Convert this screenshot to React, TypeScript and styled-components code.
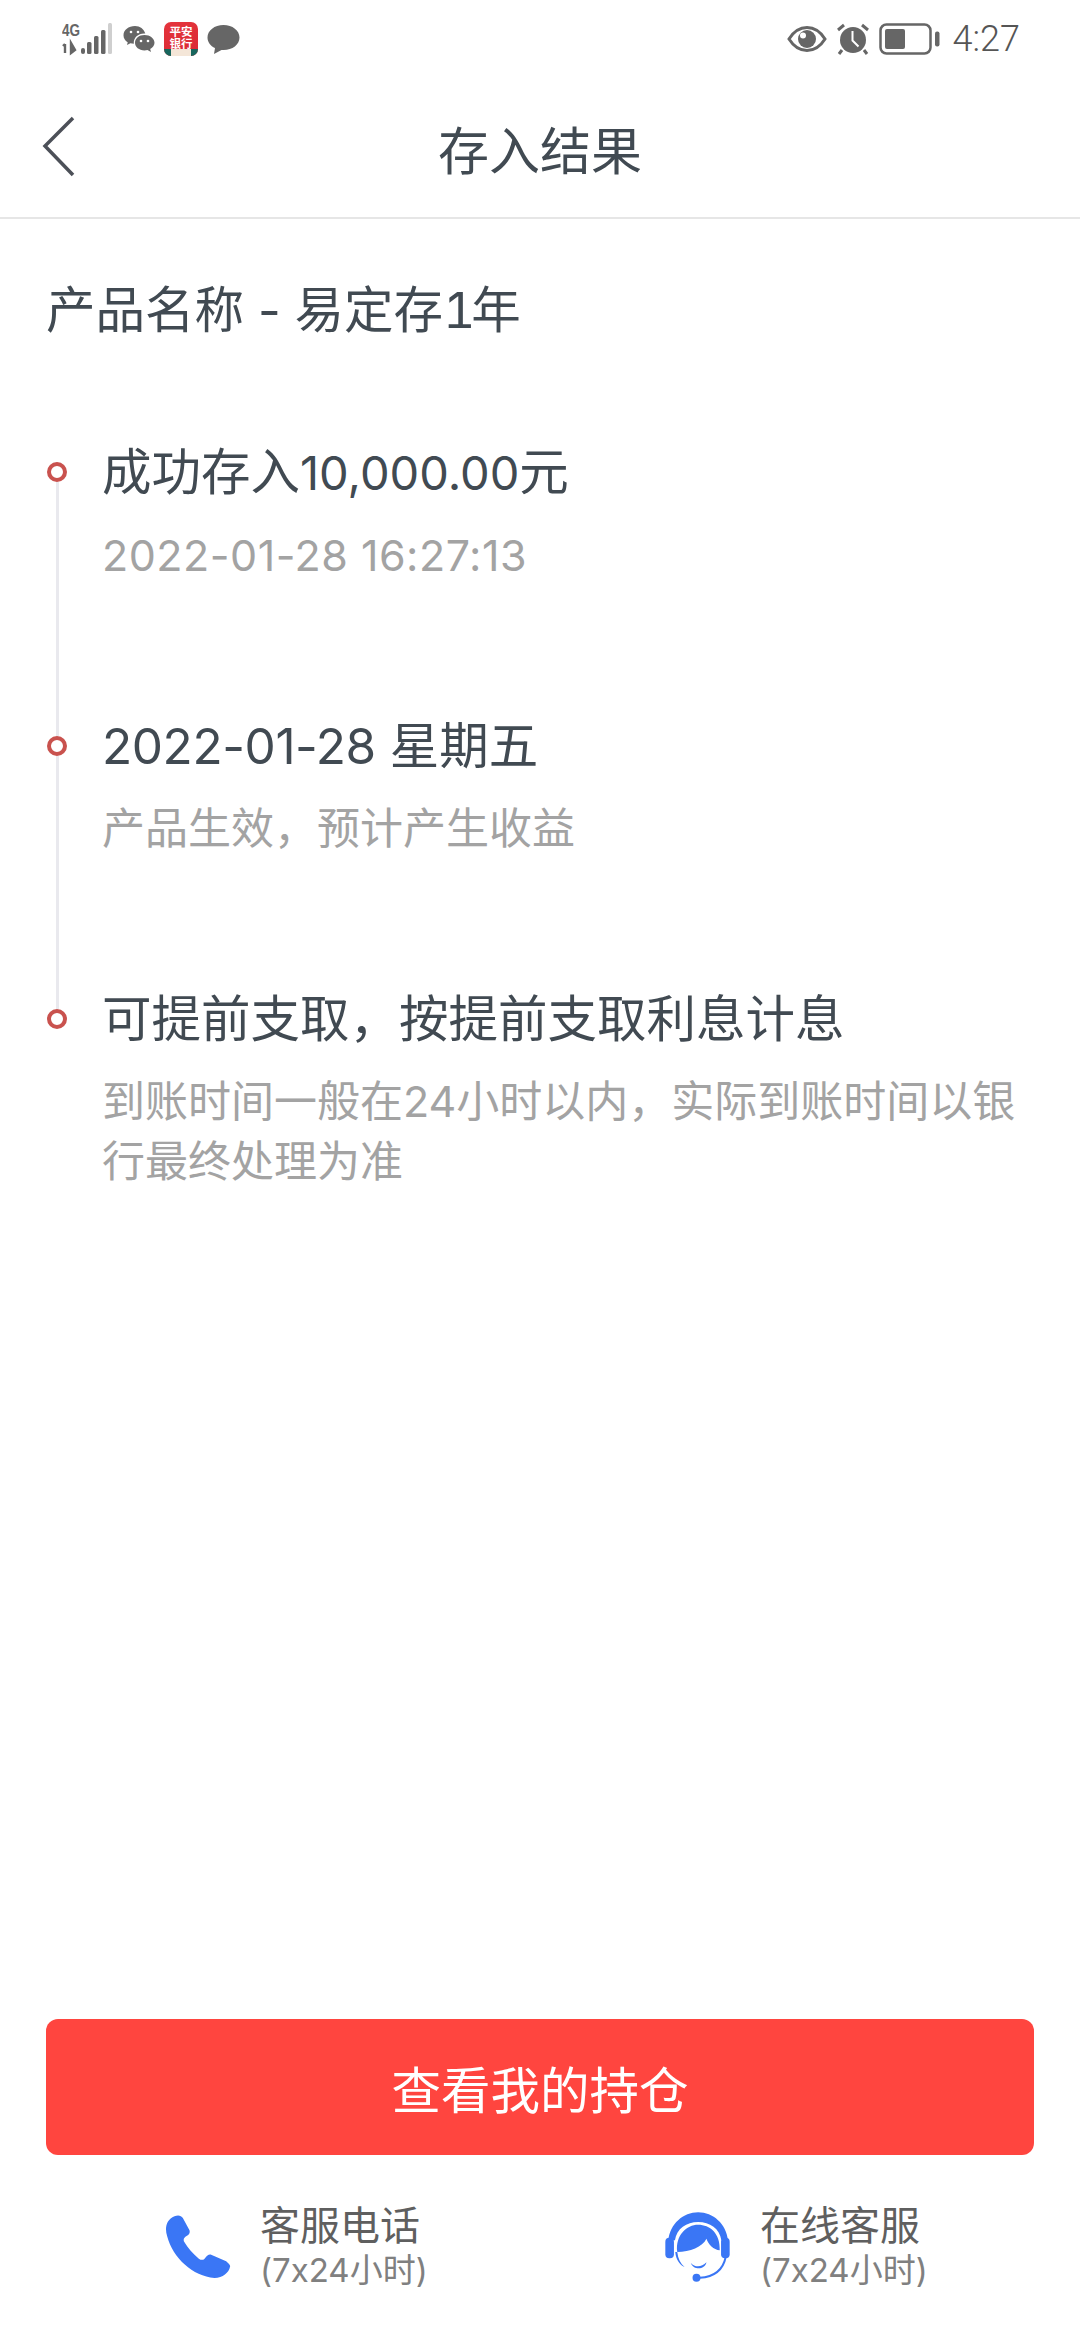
import React from 'react';
import styled, { createGlobalStyle } from 'styled-components';

const GlobalStyle = createGlobalStyle`
  html, body {
    margin: 0;
    padding: 0;
    background: #fff;
  }
  * {
    box-sizing: border-box;
  }
`;

const FONT = `Inter, "Noto Sans CJK SC", sans-serif`;

const Page = styled.div`
  width: 1080px;
  height: 2340px;
  display: flex;
  flex-direction: column;
  background: #fff;
  font-family: ${FONT};
  font-feature-settings: 'calt' 0;
  overflow: hidden;
`;

const StatusBar = styled.div`
  height: 78px;
  padding: 0 60px 0 62px;
  display: flex;
  justify-content: space-between;
  align-items: center;
  flex-shrink: 0;
`;

const StatusGroup = styled.div<{ $gap: number }>`
  display: flex;
  align-items: center;
  gap: ${(p) => p.$gap}px;
`;

const Clock = styled.span`
  font-family: Roboto, sans-serif;
  font-weight: 300;
  font-size: 36px;
  color: #555;
  margin-left: 4px;
`;

const NavBar = styled.div`
  height: 141px;
  position: relative;
  display: flex;
  align-items: center;
  justify-content: center;
  border-bottom: 2px solid #e6e6e6;
  flex-shrink: 0;
`;

const BackButton = styled.svg`
  position: absolute;
  left: 42px;
  top: 38px;
`;

const NavTitle = styled.h1`
  margin: 0;
  font-size: 51px;
  font-weight: 400;
  color: #414a52;
`;

const Content = styled.div`
  flex: 1;
  padding: 58px 46px 0;
`;

const ProductName = styled.div`
  font-size: 49.5px;
  line-height: 66px;
  color: #414a52;
  margin-bottom: 103px;
`;

const WideDigit = styled.span`
  font-variant-numeric: tabular-nums;
  letter-spacing: -4px;
`;

const Timeline = styled.div`
  display: flex;
  flex-direction: column;
`;

const Step = styled.div<{ $height?: number }>`
  display: flex;
  height: ${(p) => (p.$height ? `${p.$height}px` : 'auto')};
`;

const Rail = styled.div`
  width: 21px;
  margin-right: 35px;
  padding-top: 16px;
  display: flex;
  flex-direction: column;
  align-items: center;
  flex-shrink: 0;
`;

const Dot = styled.span`
  width: 20px;
  height: 20px;
  border-radius: 50%;
  border: 4px solid #c9524e;
  flex-shrink: 0;
`;

const RailLine = styled.span`
  flex: 1;
  width: 3px;
  margin-left: 2px;
  margin-bottom: -16px;
  background: #e9e9ee;
`;

const StepBody = styled.div`
  flex: 1;
`;

const StepTitle = styled.div`
  font-size: 49.5px;
  line-height: 52px;
  color: #414a52;
  margin-bottom: 26px;
`;

const Amount = styled.span`
  font-size: 47px;
`;

const DateText = styled.span`
  letter-spacing: -0.4px;
`;

const StepText = styled.div<{ $tracking?: number }>`
  font-size: 43px;
  line-height: 60px;
  letter-spacing: ${(p) => p.$tracking ?? 0}px;
  color: #a3a3a3;
`;

const Footer = styled.div`
  padding: 0 46px 49px;
  flex-shrink: 0;
`;

const PrimaryButton = styled.button`
  width: 100%;
  height: 136px;
  border: none;
  border-radius: 12px;
  background: #ff453f;
  color: #fff;
  font-family: ${FONT};
  font-size: 49.5px;
  display: block;
`;

const ContactRow = styled.div`
  display: grid;
  grid-template-columns: 1fr 1fr;
  margin-top: 47px;
`;

const Contact = styled.div<{ $offset: number }>`
  display: flex;
  align-items: center;
  gap: 29px;
  padding-left: ${(p) => p.$offset}px;
`;

const ContactText = styled.div`
  display: flex;
  flex-direction: column;
`;

const ContactName = styled.span`
  font-size: 40px;
  line-height: 47px;
  color: #5f5f5f;
`;

const ContactHours = styled.span`
  font-size: 33px;
  line-height: 42px;
  color: #808080;
`;

const BankBadge = styled.div`
  position: relative;
  width: 34px;
  height: 34px;
  border-radius: 7px;
  overflow: hidden;
  background: linear-gradient(160deg, #e5343c, #d92a34);
  color: #fff;
  font-family: "Noto Sans CJK SC", sans-serif;
  font-size: 11.5px;
  font-weight: 700;
  line-height: 12px;
  text-align: center;
  padding: 3px 5px 0;
  &::after {
    content: '';
    position: absolute;
    left: 0;
    right: 0;
    bottom: 0;
    height: 7px;
    background: linear-gradient(90deg, #17665d 0 20%, #f4e6d8 20% 80%, #17665d 80%);
  }
`;

const SignalIcon = () => (
  <svg width="52" height="34" viewBox="0 0 52 34">
    <text x="0" y="14" fontFamily="Liberation Sans, sans-serif" fontSize="16" fontWeight="700" fill="#666" textLength="18" lengthAdjust="spacingAndGlyphs">4G</text>
    <path d="M3 22v9M1 24l2-2M9 21v10l4-3z" stroke="#666" strokeWidth="2.400" fill="#666" />
    <rect x="19" y="26" width="4" height="6" rx="2" fill="#666" />
    <rect x="25" y="20" width="4.500" height="12" rx="1.500" fill="#666" />
    <rect x="32" y="14" width="4.500" height="18" rx="1.500" fill="#666" />
    <rect x="39" y="8" width="4.500" height="24" rx="1.500" fill="#666" />
    <rect x="46" y="1" width="4" height="31" rx="1.500" fill="#cfcfcf" />
  </svg>
);

const WechatIcon = () => (
  <svg width="32" height="28" viewBox="0 0 32 28">
    <path d="M12 1C5.500 1 .5 5 .5 10.200c0 3 1.600 5.400 4.200 7L4 20l3.400-1.700c1.200.3 2.200.5 3.400.5-.4-6.500 5-10.800 11.500-10.200C21 4 17 1 12 1z" fill="#666" />
    <path d="M21.500 10C16 10 12 13.500 12 17.700s4 7.700 9.500 7.700c1 0 2-.1 3-.4l3.500 2-.8-3c2.700-1.500 4.300-3.800 4.300-6.300C31.500 13.500 27 10 21.500 10z" fill="#666" />
    <circle cx="8" cy="7" r="1.300" fill="#fff" />
    <circle cx="15" cy="7" r="1.300" fill="#fff" />
    <circle cx="18" cy="16" r="1.300" fill="#fff" />
    <circle cx="25" cy="16" r="1.300" fill="#fff" />
  </svg>
);

const BubbleIcon = () => (
  <svg width="33" height="31" viewBox="0 0 33 31">
    <path d="M16.500 1C7.500 1 .5 6.500.5 13.500c0 4.500 3 8.400 7.500 10.600L7 30l7.500-4c.7.100 1.300.100 2 .1 9 0 16-5.600 16-12.600S25.500 1 16.500 1z" fill="#666" />
  </svg>
);

const EyeIcon = () => (
  <svg width="40" height="28" viewBox="0 0 40 28">
    <path d="M2 14C7 6 13 2.500 20 2.500S33 6 38 14c-5 8-11 11.500-18 11.500S7 22 2 14z" fill="none" stroke="#666" strokeWidth="3" />
    <circle cx="20" cy="14" r="9" fill="#666" />
    <circle cx="16" cy="10.500" r="3" fill="#fff" />
  </svg>
);

const AlarmIcon = () => (
  <svg width="36" height="32" viewBox="0 0 36 32">
    <circle cx="18" cy="17" r="13" fill="#666" />
    <path d="M17.500 8v9.500l6 6" fill="none" stroke="#fff" strokeWidth="2" />
    <path d="M3 7l6-5M33 7l-6-5M7 27l-3 4M29 27l3 4" stroke="#666" strokeWidth="3" />
  </svg>
);

const BatteryIcon = () => (
  <svg width="62" height="32" viewBox="0 0 62 32">
    <rect x="1.500" y="1.500" width="50" height="29" rx="6" fill="none" stroke="#666" strokeWidth="2.500" />
    <rect x="6" y="6" width="20" height="20" rx="2" fill="#666" />
    <rect x="56" y="8.500" width="4.500" height="15" rx="2" fill="#666" />
  </svg>
);

const PhoneIcon = () => (
  <svg width="66" height="64" viewBox="103 136 195 192">
    <path d="M130 140C105 150 100 175 108 200C125 265 185 320 250 325C275 325 293 310 297 290C297 285 290 280 285 275L240 255C232 253 228 258 222 265C218 272 210 272 203 267C185 252 170 235 160 218C155 210 158 205 165 200C175 195 177 188 175 182L155 145C150 137 140 135 130 140Z" fill="#3a76f5" />
  </svg>
);

const AgentIcon = () => (
  <svg width="67" height="72" viewBox="22 12 202 216">
    <path d="M35 100C40 50 80 15 125 15C170 15 210 50 215 100L195 100C190 65 160 45 125 45C90 45 60 65 55 100Z" fill="#3a76f5" />
    <path d="M62 135C56 85 90 53 125 53C160 53 192 78 190 130C172 128 155 112 150 95C138 120 100 135 62 135Z" fill="#3a76f5" />
    <path d="M62 135C64 155 72 170 84 180C72 176 58 160 56 135Z" fill="#3a76f5" />
    <path d="M103 168C115 182 135 182 150 166C145 190 110 190 103 168Z" fill="#3a76f5" />
    <rect x="26" y="92" width="26" height="62" rx="12" fill="#3a76f5" />
    <rect x="194" y="92" width="26" height="62" rx="12" fill="#3a76f5" />
    <path d="M208 150C200 190 170 210 130 213" fill="none" stroke="#3a76f5" strokeWidth="6" />
    <circle cx="120" cy="213" r="12" fill="#3a76f5" />
  </svg>
);

const App: React.FC = () => {
  return (
    <Page>
      <GlobalStyle />
      <StatusBar>
        <StatusGroup $gap={9}>
          <SignalIcon />
          <WechatIcon />
          <BankBadge>平安银行</BankBadge>
          <BubbleIcon />
        </StatusGroup>
        <StatusGroup $gap={8}>
          <EyeIcon />
          <AlarmIcon />
          <BatteryIcon />
          <Clock>4:27</Clock>
        </StatusGroup>
      </StatusBar>

      <NavBar>
        <BackButton width="34" height="62" viewBox="0 0 34 62">
          <path d="M31 2L3 30l28 29" fill="none" stroke="#4c5058" strokeWidth="3.500" />
        </BackButton>
        <NavTitle>存入结果</NavTitle>
      </NavBar>

      <Content>
        <ProductName>产品名称 - 易定存<WideDigit>1</WideDigit>年</ProductName>
        <Timeline>
          <Step $height={274}>
            <Rail>
              <Dot />
              <RailLine />
            </Rail>
            <StepBody>
              <StepTitle>成功存入<Amount>10,000.00</Amount>元</StepTitle>
              <StepText $tracking={0.5}>2022-01-28 16:27:13</StepText>
            </StepBody>
          </Step>
          <Step $height={273}>
            <Rail>
              <Dot />
              <RailLine />
            </Rail>
            <StepBody>
              <StepTitle><DateText>2022-01-28</DateText> 星期五</StepTitle>
              <StepText>产品生效，预计产生收益</StepText>
            </StepBody>
          </Step>
          <Step>
            <Rail>
              <Dot />
            </Rail>
            <StepBody>
              <StepTitle>可提前支取，按提前支取利息计息</StepTitle>
              <StepText>到账时间一般在24小时以内，实际到账时间以银行最终处理为准</StepText>
            </StepBody>
          </Step>
        </Timeline>
      </Content>

      <Footer>
        <PrimaryButton>查看我的持仓</PrimaryButton>
        <ContactRow>
          <Contact $offset={119}>
            <PhoneIcon />
            <ContactText>
              <ContactName>客服电话</ContactName>
              <ContactHours>(7x24小时)</ContactHours>
            </ContactText>
          </Contact>
          <Contact $offset={124}>
            <AgentIcon />
            <ContactText>
              <ContactName>在线客服</ContactName>
              <ContactHours>(7x24小时)</ContactHours>
            </ContactText>
          </Contact>
        </ContactRow>
      </Footer>
    </Page>
  );
};

export default App;
